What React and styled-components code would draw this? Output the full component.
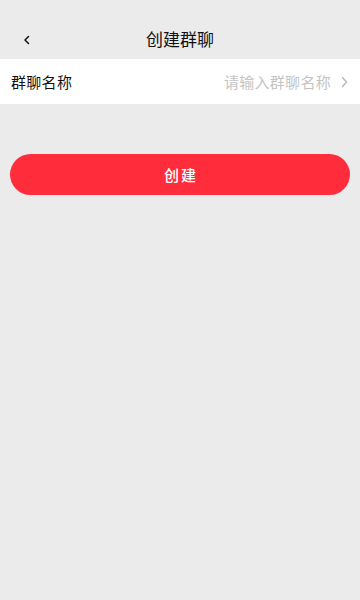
import React, { useState } from "react";
import styled, { createGlobalStyle } from "styled-components";

const GlobalStyle = createGlobalStyle`
  html, body {
    margin: 0;
    padding: 0;
    background: #ebebeb;
    font-family: "Noto Sans CJK SC", "Noto Sans", sans-serif;
  }
`;

function App() {
  const [name, setName] = useState("");

  return (
    <Page>
      <GlobalStyle />
      <Header>
        <BackBtn aria-label="back">
          <svg width="10" height="10" viewBox="0 0 10 10">
            <path d="M6.5 1.5 L3 5 L6.5 8.5" fill="none" stroke="#111" strokeWidth="1.5" strokeLinecap="round" strokeLinejoin="round" />
          </svg>
        </BackBtn>
        <Title>创建群聊</Title>
      </Header>
      <Row>
        <Label>群聊名称</Label>
        <NameInput
          value={name}
          onChange={(e) => setName(e.target.value)}
          placeholder="请输入群聊名称"
        />
        <svg width="7" height="12" viewBox="0 0 7 12">
          <path d="M1.5 1.5 L5.5 6 L1.5 10.5" fill="none" stroke="#b5b5b5" strokeWidth="1.3" strokeLinecap="round" strokeLinejoin="round" />
        </svg>
      </Row>
      <ButtonContainer>
        <CreateBtn>创建</CreateBtn>
      </ButtonContainer>
    </Page>
  );
}

export default App;

const Page = styled.div`
  min-height: 600px;
  background: #ebebeb;
`;

const Header = styled.div`
  position: relative;
  height: 59px;
  display: flex;
  align-items: flex-end;
  justify-content: center;
  padding-bottom: 8px;
  box-sizing: border-box;
`;

const BackBtn = styled.button`
  position: absolute;
  left: 22px;
  bottom: 14px;
  border: none;
  background: none;
  padding: 0;
  display: flex;
`;

const Title = styled.p`
  margin: 0;
  font-size: 17px;
  line-height: 24px;
  color: #111;
`;

const Row = styled.div`
  height: 45px;
  background: #fff;
  display: flex;
  align-items: center;
  padding: 0 12px 0 11px;
  gap: 10px;
`;

const Label = styled.span`
  font-size: 15px;
  letter-spacing: 0.3px;
  color: #111;
  white-space: nowrap;
`;

const NameInput = styled.input`
  flex: 1;
  min-width: 0;
  border: none;
  outline: none;
  text-align: right;
  font-family: "Noto Sans CJK SC", sans-serif;
  font-size: 15px;
  letter-spacing: 0.3px;
  color: #333;
  background: transparent;
  padding: 0;
  &::placeholder {
    color: #c4c4c4;
  }
`;

const ButtonContainer = styled.div`
  padding: 50px 10px 0 10px;
`;

const CreateBtn = styled.button`
  width: 100%;
  height: 41px;
  border: none;
  border-radius: 21px;
  background: #ff2d3b;
  color: #fff;
  font-family: "Noto Sans CJK SC", sans-serif;
  font-size: 15px;
  font-weight: 500;
  letter-spacing: 2px;
  text-indent: 2px;
`;
